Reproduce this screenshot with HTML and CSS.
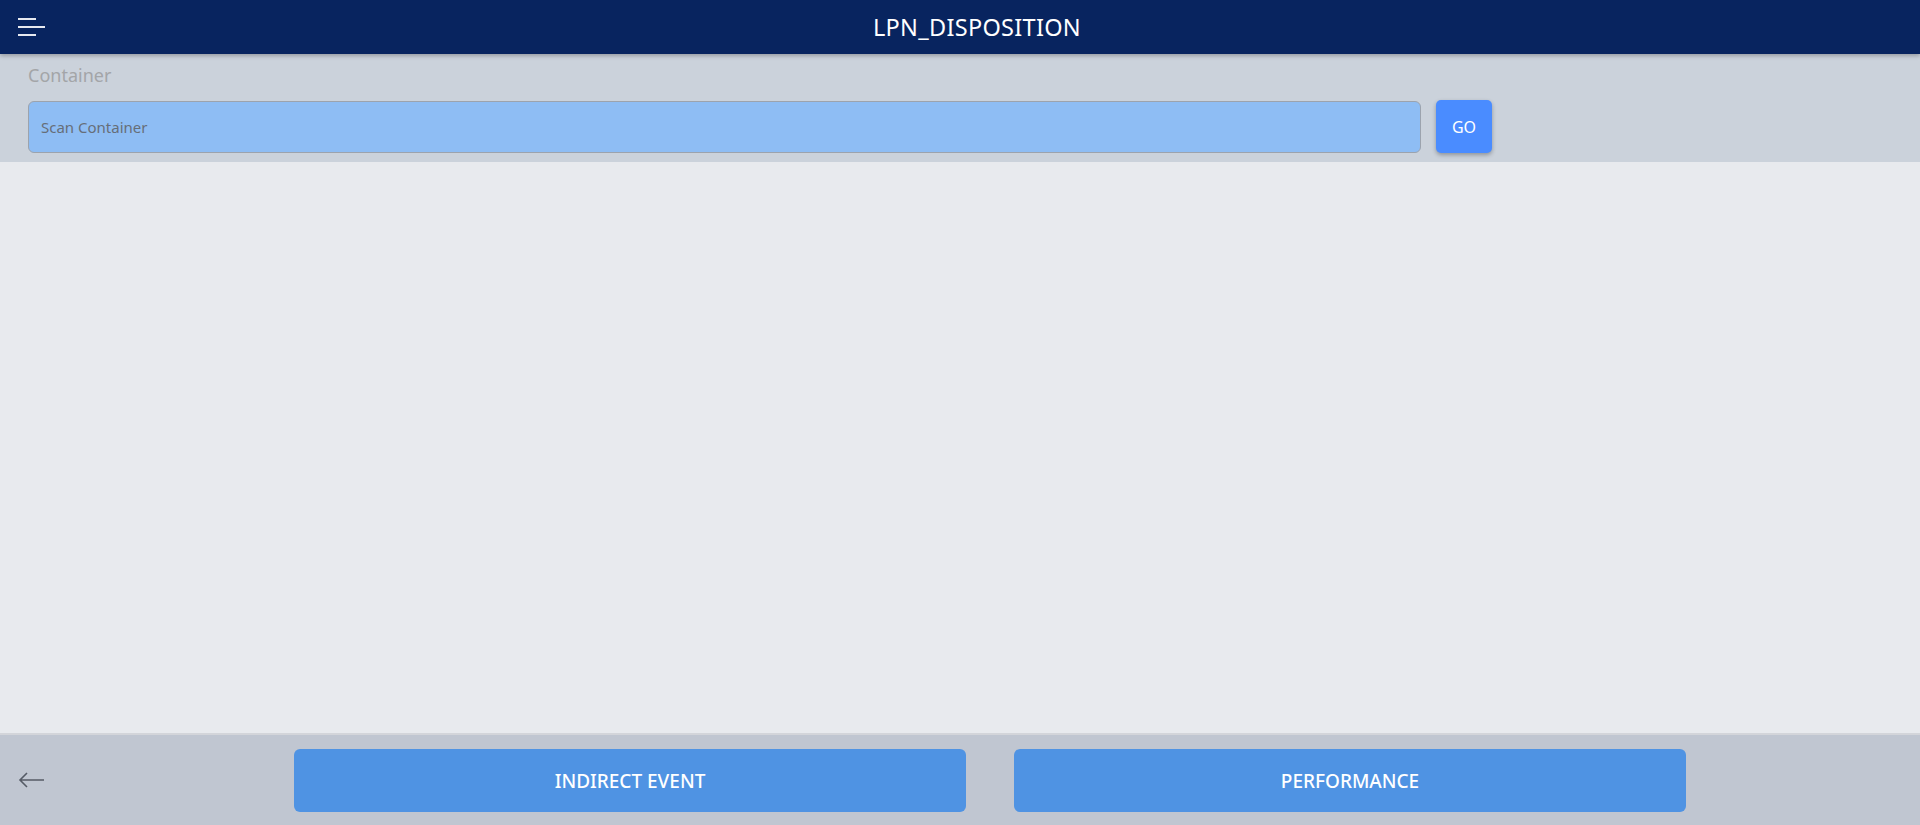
FILE: index.html
```html
<!DOCTYPE html>
<html>
<head>
<meta charset="utf-8">
<link rel="stylesheet" href="styles.css">
</head>
<body>
<div class="app">
  <header class="topbar">
    <button class="menu-btn" aria-label="menu">
      <svg width="28" height="20" viewBox="0 0 28 20">
        <rect x="0" y="1" width="18" height="2" fill="#e6e9f0"/>
        <rect x="0" y="9" width="27" height="2" fill="#e6e9f0"/>
        <rect x="0" y="17" width="18" height="2" fill="#e6e9f0"/>
      </svg>
    </button>
    <h1 class="title">LPN_DISPOSITION</h1>
  </header>
  <section class="scan-panel">
    <label class="scan-label">Container</label>
    <div class="scan-row">
      <input class="scan-input" type="text" placeholder="Scan Container">
      <button class="go-btn">GO</button>
    </div>
  </section>
  <main class="content"></main>
  <footer class="footer">
    <div class="back">
      <svg width="28" height="18" viewBox="0 0 28 18">
        <path d="M26 9 H2 M9 2 L2 9 L9 16" fill="none" stroke="#555b66" stroke-width="1.6"/>
      </svg>
    </div>
    <div class="actions">
      <button class="action-btn">INDIRECT EVENT</button>
      <button class="action-btn">PERFORMANCE</button>
    </div>
  </footer>
</div>
</body>
</html>
```
FILE: styles.css
```css
* { box-sizing: border-box; }
html, body { margin: 0; padding: 0; height: 100%; }
body {
  font-family: "Noto Sans", "Open Sans", sans-serif;
  background: #e8eaee;
}
.app {
  display: flex;
  flex-direction: column;
  height: 825px;
}
.topbar {
  height: 54px;
  background: #08245f;
  display: flex;
  align-items: center;
  box-shadow: 0 2px 4px rgba(0,0,0,0.25);
  position: relative;
  z-index: 2;
  flex-shrink: 0;
}
.menu-btn {
  background: none;
  border: none;
  padding: 0;
  margin-left: 18px;
  width: 28px;
  height: 20px;
  display: flex;
  cursor: pointer;
}
.title {
  flex: 1;
  margin: 0;
  text-align: center;
  color: #ffffff;
  font-size: 23.5px;
  font-weight: 400;
  letter-spacing: 0.3px;
  padding-right: 12px;
}
.scan-panel {
  background: #cbd2db;
  height: 108px;
  padding: 9px 28px 0 28px;
  flex-shrink: 0;
}
.scan-label {
  display: block;
  color: #a3a5a8;
  font-size: 18px;
  line-height: 24px;
}
.scan-row {
  display: flex;
  align-items: stretch;
  gap: 15px;
  margin-top: 14px;
  width: 1464px;
}
.scan-input {
  flex: 1;
  height: 52px;
  background: #8ebdf4;
  border: 1px solid #9ca3ad;
  border-radius: 6px;
  padding: 0 12px;
  font-family: inherit;
  font-size: 15px;
  color: #333;
  outline: none;
}
.scan-input::placeholder { color: #666e78; }
.go-btn {
  width: 56px;
  height: 53px;
  margin-top: -1px;
  background: #4a8cff;
  color: #fff;
  border: none;
  border-radius: 5px;
  font-family: inherit;
  font-size: 16px;
  box-shadow: 0 2px 4px rgba(0,0,0,0.3);
}
.content {
  flex: 1;
  background: #e8eaee;
}
.footer {
  height: 92px;
  background: #c0c6d1;
  border-top: 2px solid #d3d5da;
  display: flex;
  flex-shrink: 0;
}
.back {
  width: 60px;
  display: flex;
  align-items: flex-start;
  padding-top: 36px;
  padding-left: 18px;
}
.actions {
  flex: 1;
  display: flex;
  justify-content: center;
  gap: 48px;
  padding-top: 14px;
}
.action-btn {
  width: 672px;
  height: 63px;
  background: #4f93e3;
  color: #fff;
  border: none;
  border-radius: 6px;
  font-family: inherit;
  font-size: 19px;
  font-weight: 500;
}
```
